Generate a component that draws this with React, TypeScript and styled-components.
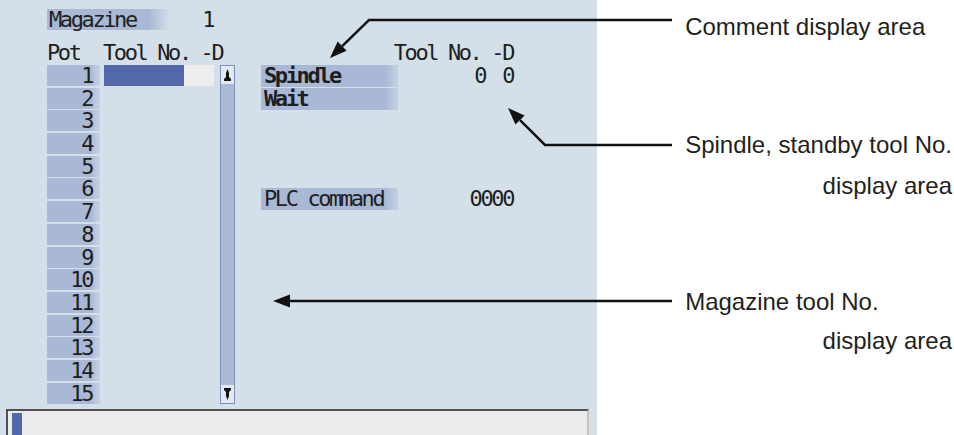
import styled, { createGlobalStyle } from 'styled-components'

const GlobalStyle = createGlobalStyle`
  html, body {
    margin: 0;
    padding: 0;
    background: #ffffff;
  }
`

const MONO = `'DejaVu Sans Mono', 'Liberation Mono', monospace`
const LABEL = '#a9b8d4'
const PANEL = '#d3dfe9'

const Page = styled.div`
  position: relative;
  display: flex;
  width: 954px;
  height: 435px;
  overflow: hidden;
`

const Screen = styled.div`
  width: 598px;
  height: 435px;
  box-sizing: border-box;
  padding-top: 9px;
  background: ${PANEL};
  display: flex;
  flex-direction: column;
  font-family: ${MONO};
  font-size: 22px;
  letter-spacing: -2.4px;
  color: #1e1e1e;
`

const Content = styled.div`
  padding-left: 47px;
  display: flex;
  flex-direction: column;
`

const MagRow = styled.div`
  display: flex;
  height: 21px;
  line-height: 21px;
`

const MagLabel = styled.div`
  width: 121px;
  padding-left: 2px;
  background: linear-gradient(to right, ${LABEL} 0%, ${LABEL} 82%, ${PANEL} 100%);
`

const MagValue = styled.div`
  width: 43px;
  text-align: right;
`

const Body = styled.div`
  display: flex;
  gap: 26px;
  margin-top: 12px;
`

const LeftSection = styled.div`
  display: flex;
  flex-direction: column;
  width: 188px;
`

const HeaderRow = styled.div<{ $align?: string }>`
  display: flex;
  justify-content: ${(p) => p.$align || 'flex-start'};
  height: 23px;
  line-height: 21px;
`

const HeaderPot = styled.span`
  width: 56px;
`

const Table = styled.div`
  display: flex;
`

const Column = styled.div<{ $width: number; $mr: number }>`
  display: flex;
  flex-direction: column;
  gap: 1.7px;
  width: ${(p) => p.$width}px;
  margin-right: ${(p) => p.$mr}px;
`

const PotCell = styled.div`
  height: 21px;
  line-height: 21px;
  text-align: right;
  padding-right: 8px;
  background: linear-gradient(to right, ${LABEL} 0%, ${LABEL} 82%, #bcc8de 92%, #c6d1e3 100%);
`

const ToolCell = styled.div`
  display: flex;
  height: 21px;
`

const ToolNo = styled.div<{ $selected?: boolean }>`
  width: 80px;
  background: ${(p) => (p.$selected ? '#5368a9' : 'transparent')};
`

const DCell = styled.div<{ $selected?: boolean }>`
  width: 30px;
  background: ${(p) => (p.$selected ? '#ededed' : 'transparent')};
`

const ScrollBar = styled.div`
  width: 15px;
  box-sizing: border-box;
  border: 1px solid #7d8fb6;
  background: #a9b9d6;
  display: flex;
  flex-direction: column;
  justify-content: space-between;
`

const ScrollButton = styled.div`
  height: 18px;
  background: #e4e9f1;
  display: flex;
  align-items: center;
  justify-content: center;
`

const RightSection = styled.div`
  display: flex;
  flex-direction: column;
  width: 252px;
`

const InfoRow = styled.div<{ $mt: number }>`
  display: grid;
  grid-template-columns: 137px 1fr 28px;
  height: 22px;
  line-height: 22px;
  margin-top: ${(p) => p.$mt}px;
`

const InfoLabel = styled.div<{ $bold?: boolean }>`
  padding-left: 3px;
  font-weight: ${(p) => (p.$bold ? 700 : 400)};
  background: linear-gradient(to right, ${LABEL} 0%, ${LABEL} 90%, #bac7de 96%, #c4d0e2 100%);
`

const Value = styled.div<{ $span?: number }>`
  text-align: right;
  grid-column: span ${(p) => p.$span || 1};
`

const InputBar = styled.div`
  margin: auto 8px 0 6px;
  height: 26px;
  box-sizing: border-box;
  border-top: 2px solid #505050;
  border-left: 2px solid #505050;
  border-right: 2px solid #c4c4c4;
  background: #ececec;
  padding: 2px 0 0 4px;
  display: flex;
`

const Cursor = styled.div`
  width: 10px;
  background: #5368a9;
`

const Notes = styled.div`
  flex: 1;
  display: flex;
  flex-direction: column;
  padding: 0 2px 0 88px;
  font-family: 'Liberation Sans', Arial, sans-serif;
  font-size: 24px;
  line-height: 28px;
  color: #231f20;
`

const Callout = styled.div<{ $mt: number }>`
  display: flex;
  flex-direction: column;
  margin-top: ${(p) => p.$mt}px;
`

const NoteLine = styled.div<{ $mt?: number; $right?: boolean }>`
  margin-top: ${(p) => p.$mt || 0}px;
  align-self: ${(p) => (p.$right ? 'flex-end' : 'flex-start')};
  white-space: nowrap;
`

const Overlay = styled.svg`
  position: absolute;
  left: 0;
  top: 0;
  pointer-events: none;
`

const ScrollArrow = ({ down }: { down?: boolean }) => (
  <svg width='7' height='12' viewBox='0 0 7 12' style={down ? { transform: 'rotate(180deg)' } : undefined}>
    <path d='M3.5 0 L5 4 L5 8 L7 10 L7 12 L0 12 L0 10 L2 8 L2 4 Z' fill='#111' />
  </svg>
)

// arrowhead triangle for a line from (x1,y1) ending at tip (x2,y2)
const arrow = (x1: number, y1: number, x2: number, y2: number, len = 17, half = 6.5) => {
  const dx = x2 - x1
  const dy = y2 - y1
  const d = Math.hypot(dx, dy)
  const ux = dx / d
  const uy = dy / d
  const bx = x2 - ux * len
  const by = y2 - uy * len
  return {
    base: [bx, by],
    points: `${x2},${y2} ${bx - uy * half},${by + ux * half} ${bx + uy * half},${by - ux * half}`,
  }
}

const callouts = [
  { line: '672,20 369,20', from: [369, 20], tip: [330, 58] },
  { line: '672,145 545,145', from: [545, 145], tip: [508, 108] },
  { line: '', from: [672, 301], tip: [273, 301] },
]

const pots = Array.from({ length: 15 }, (_, i) => i + 1)

const App = () => {
  return (
    <>
      <GlobalStyle />
      <Page>
        <Screen>
          <Content>
            <MagRow>
              <MagLabel>Magazine</MagLabel>
              <MagValue>1</MagValue>
            </MagRow>
            <Body>
              <LeftSection>
                <HeaderRow>
                  <HeaderPot>Pot</HeaderPot>
                  <span>Tool No. -D</span>
                </HeaderRow>
                <Table>
                  <Column $width={53} $mr={4}>
                    {pots.map((p) => (
                      <PotCell key={p}>{p}</PotCell>
                    ))}
                  </Column>
                  <Column $width={110} $mr={6}>
                    {pots.map((p) => (
                      <ToolCell key={p}>
                        <ToolNo $selected={p === 1} />
                        <DCell $selected={p === 1} />
                      </ToolCell>
                    ))}
                  </Column>
                  <ScrollBar>
                    <ScrollButton>
                      <ScrollArrow />
                    </ScrollButton>
                    <ScrollButton>
                      <ScrollArrow down />
                    </ScrollButton>
                  </ScrollBar>
                </Table>
              </LeftSection>
              <RightSection>
                <HeaderRow $align='flex-end'>Tool No. -D</HeaderRow>
                <InfoRow $mt={0}>
                  <InfoLabel $bold>Spindle</InfoLabel>
                  <Value>0</Value>
                  <Value>0</Value>
                </InfoRow>
                <InfoRow $mt={1}>
                  <InfoLabel $bold>Wait</InfoLabel>
                  <Value />
                  <Value />
                </InfoRow>
                <InfoRow $mt={78}>
                  <InfoLabel>PLC command</InfoLabel>
                  <Value $span={2}>0000</Value>
                </InfoRow>
              </RightSection>
            </Body>
          </Content>
          <InputBar>
            <Cursor />
          </InputBar>
        </Screen>
        <Notes>
          <Callout $mt={13}>
            <NoteLine>Comment display area</NoteLine>
          </Callout>
          <Callout $mt={90}>
            <NoteLine>Spindle, standby tool No.</NoteLine>
            <NoteLine $mt={13} $right>
              display area
            </NoteLine>
          </Callout>
          <Callout $mt={88}>
            <NoteLine>Magazine tool No.</NoteLine>
            <NoteLine $mt={11} $right>
              display area
            </NoteLine>
          </Callout>
        </Notes>
        <Overlay width='954' height='435' viewBox='0 0 954 435'>
          {callouts.map((c, i) => {
            const a = arrow(c.from[0], c.from[1], c.tip[0], c.tip[1])
            const pts = `${c.line ? c.line + ' ' : `${c.from[0]},${c.from[1]} `}${a.base[0]},${a.base[1]}`
            return (
              <g key={i}>
                <polyline points={pts} fill='none' stroke='#111' strokeWidth='2.5' />
                <polygon points={a.points} fill='#111' />
              </g>
            )
          })}
        </Overlay>
      </Page>
    </>
  )
}

export default App
